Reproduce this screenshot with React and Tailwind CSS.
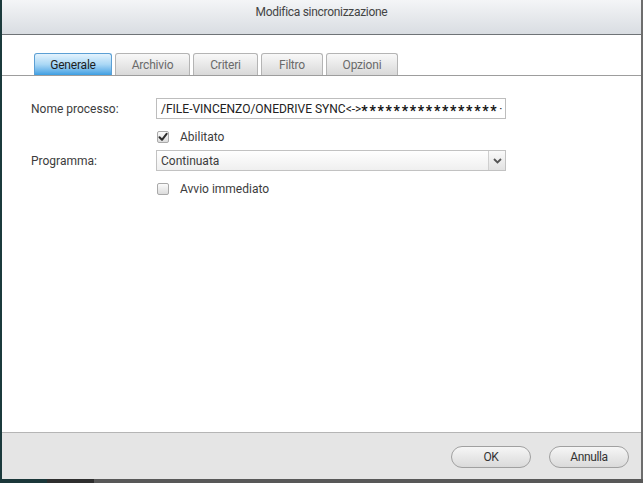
import React from "react";

const font = { fontFamily: "Roboto, 'Noto Sans', sans-serif" };

function Tab({ label, active, w }) {
  return (
    <div
      className={
        "h-[22px] flex items-center justify-center rounded-t-[3px] border border-b-0 text-[12px] tracking-[-0.2px] " +
        (active
          ? "border-[#5b9fd4] bg-gradient-to-b from-[#e4f3fd] via-[#a9d7f5] to-[#3c9fe2] text-[#1e1e1e]"
          : "border-[#b4b4b4] bg-gradient-to-b from-[#f8f8f8] to-[#d9d9d9] text-[#6a6a6a]") +
        " " + w
      }
    >
      {label}
    </div>
  );
}

function Checkbox({ checked }) {
  return (
    <div className="w-[12px] h-[12px] rounded-[2px] border border-[#a9a9a9] bg-gradient-to-b from-[#fbfbfb] to-[#dcdcdc] flex items-center justify-center">
      {checked && (
        <svg width="10" height="10" viewBox="0 0 10 10">
          <path d="M1.5 5.2 L4 7.8 L8.6 1.8" fill="none" stroke="#2d2d2d" strokeWidth="2" strokeLinecap="round" strokeLinejoin="round" />
        </svg>
      )}
    </div>
  );
}

export default function App() {
  return (
    <div className="w-[643px] h-[483px] flex flex-col bg-[#5a5a5a] overflow-hidden" style={font}>
      <div className="h-[479px] flex">
        <div className="w-[2px] bg-[#1b3a3c]" />
        <div className="flex-1 flex flex-col bg-white">
          <div className="h-[35px] border-b border-[#6f7377] bg-gradient-to-b from-[#f4f5f7] to-[#d9dde2] flex justify-center pt-[5px]">
            <span className="text-[12px] leading-[14px] text-[#444] tracking-[-0.3px]">Modifica sincronizzazione</span>
          </div>
          <div className="flex-1 flex flex-col">
            <div className="pt-[18px] pl-[32px] flex gap-[3px] border-b border-[#9d9d9d]">
              <Tab label="Generale" active w="w-[78px]" />
              <Tab label="Archivio" w="w-[75px]" />
              <Tab label="Criteri" w="w-[65px]" />
              <Tab label="Filtro" w="w-[62px]" />
              <Tab label="Opzioni" w="w-[72px]" />
            </div>
            <div className="pt-[22px] pl-[29px] flex flex-col text-[12px] text-[#3c3c3c]">
              <div className="flex items-center h-[21px]">
                <div className="w-[125px]">Nome processo:</div>
                <div className="w-[350px] h-[21px] border border-[#bdbdbd] flex items-center pl-[4px] overflow-hidden whitespace-nowrap text-[#222]">
                  <span>/FILE-VINCENZO/ONEDRIVE SYNC&lt;-&gt;</span>
                  <span className="font-bold text-[14px] leading-[14px] tracking-[1.7px] text-[#111] translate-y-[2px]">*****************</span>
                  <span className="ml-[1px]">·</span>
                </div>
              </div>
              <div className="flex items-center mt-[12px] h-[12px] pl-[126px]">
                <Checkbox checked />
                <span className="ml-[11px]">Abilitato</span>
              </div>
              <div className="flex items-center mt-[7px] h-[21px]">
                <div className="w-[125px]">Programma:</div>
                <div className="w-[350px] h-[21px] border border-[#c2c2c2] flex bg-gradient-to-b from-white to-[#efefef]">
                  <div className="flex-1 flex items-center pl-[4px]">Continuata</div>
                  <div className="w-[17px] border-l border-[#cfcfcf] flex items-center justify-center bg-gradient-to-b from-[#fafafa] to-[#e2e2e2]">
                    <svg width="9" height="6" viewBox="0 0 9 6">
                      <path d="M1 1 L4.5 4.5 L8 1" fill="none" stroke="#555" strokeWidth="1.8" />
                    </svg>
                  </div>
                </div>
              </div>
              <div className="flex items-center mt-[12px] h-[12px] pl-[126px]">
                <Checkbox />
                <span className="ml-[11px]">Avvio immediato</span>
              </div>
            </div>
          </div>
          <div className="h-[47px] border-t border-[#b5b5b5] bg-[#e5e5e5] flex justify-end items-start pt-[13px] pr-[12px] gap-[18px]">
            <button className="w-[80px] h-[22px] rounded-full border border-[#a0a0a0] bg-gradient-to-b from-[#f6f6f6] to-[#dadada] text-[12px] text-[#333] tracking-[-0.4px]">OK</button>
            <button className="w-[80px] h-[22px] rounded-full border border-[#a0a0a0] bg-gradient-to-b from-[#f6f6f6] to-[#dadada] text-[12px] text-[#333] tracking-[-0.4px]">Annulla</button>
          </div>
        </div>
        <div className="w-[2px] bg-[#6d6d6d]" />
      </div>
      <div className="h-[4px] flex">
        <div className="w-[47px] bg-[#1b3739]" />
        <div className="w-[47px] bg-[#2e2e2e]" />
        <div className="flex-1 bg-[#585858]" />
      </div>
    </div>
  );
}
